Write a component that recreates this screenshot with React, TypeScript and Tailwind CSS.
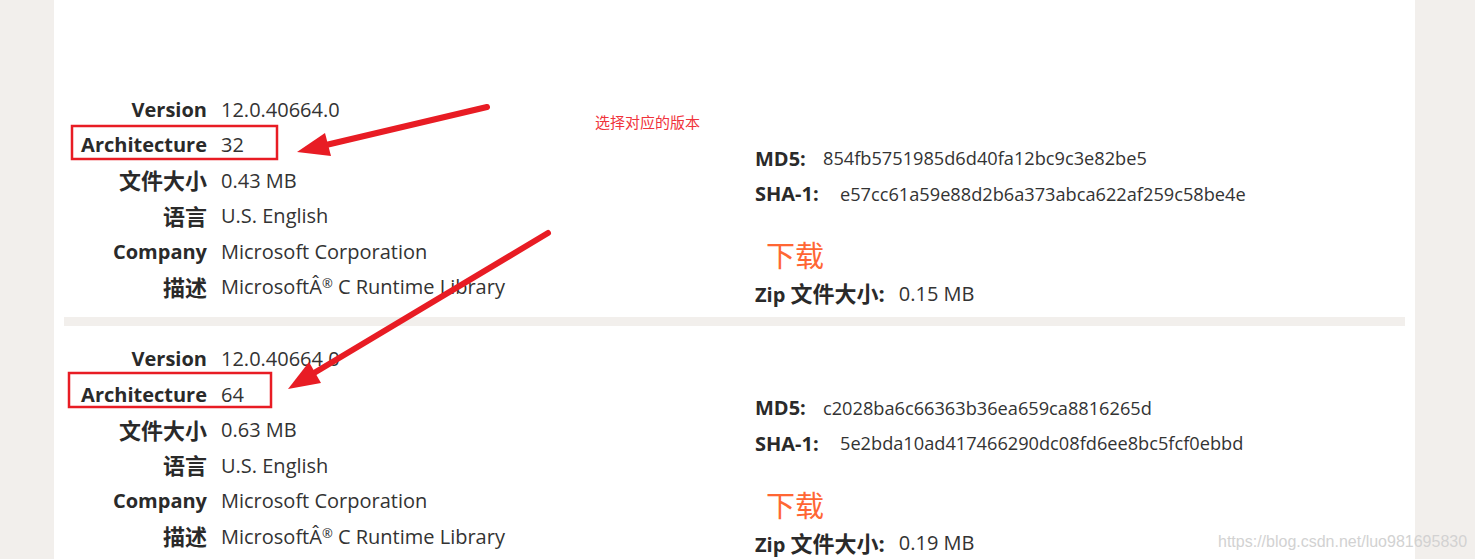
import React from 'react'

type Pacote = {
  versao: string
  arquitetura: string
  tamanho: string
  md5: string
  sha1: string
  zip: string
}

const pacotes: Pacote[] = [
  {
    versao: '12.0.40664.0',
    arquitetura: '32',
    tamanho: '0.43 MB',
    md5: '854fb5751985d6d40fa12bc9c3e82be5',
    sha1: 'e57cc61a59e88d2b6a373abca622af259c58be4e',
    zip: '0.15 MB',
  },
  {
    versao: '12.0.40664.0',
    arquitetura: '64',
    tamanho: '0.63 MB',
    md5: 'c2028ba6c66363b36ea659ca8816265d',
    sha1: '5e2bda10ad417466290dc08fd6ee8bc5fcf0ebbd',
    zip: '0.19 MB',
  },
]

function Linha({ label, valor, cjk }: { label: string; valor: React.ReactNode; cjk?: boolean }) {
  return (
    <div className="flex items-center h-[35.5px]">
      <span className={`w-[143px] text-right font-bold text-[#2a2a2a] ${cjk ? 'text-[22px]' : ''}`}>
        {label}
      </span>
      <span className="ml-[14px] text-[#333]">{valor}</span>
    </div>
  )
}

function Bloco({ p }: { p: Pacote }) {
  return (
    <div className="flex items-start">
      {/* coluna da esquerda com os detalhes */}
      <div className="w-[691px] flex flex-col">
        <Linha label="Version" valor={p.versao} />
        <Linha label="Architecture" valor={p.arquitetura} />
        <Linha label="文件大小" valor={p.tamanho} cjk />
        <Linha label="语言" valor="U.S. English" cjk />
        <Linha label="Company" valor="Microsoft Corporation" />
        <Linha
          label="描述"
          valor={
            <>
              MicrosoftÂ<span className="text-[13px] relative -top-[6px]">®</span> C Runtime Library
            </>
          }
          cjk
        />
      </div>
      {/* coluna da direita: hashes e download */}
      <div className="flex flex-col pt-[49px]">
        <div className="flex items-center h-[35.5px]">
          <span className="w-[68px] font-bold text-[#2a2a2a]">MD5:</span>
          <span className="text-[18.2px] text-[#333]">{p.md5}</span>
        </div>
        <div className="flex items-center h-[35.5px]">
          <span className="w-[85px] font-bold text-[#2a2a2a]">SHA-1:</span>
          <span className="text-[18.2px] text-[#333]">{p.sha1}</span>
        </div>
        <div className="mt-[24px] h-[40px] flex items-center pl-[11px] text-[29px] text-[#ff6633]">下载</div>
        <div className="flex items-center h-[35.5px]">
          <span className="font-bold text-[#2a2a2a]">
            Zip <span className="text-[22px]">文件大小:</span>
          </span>
          <span className="ml-[14px] text-[#333]">{p.zip}</span>
        </div>
      </div>
    </div>
  )
}

export default function App() {
  return (
    <div
      className="relative h-[559px] w-[1475px] overflow-hidden flex bg-[#f2efec] text-[20px]"
      style={{ fontFamily: '"Open Sans", "Noto Sans CJK SC", sans-serif' }}
    >
      <div className="w-[54px]" />
      <div className="w-[1361px] bg-white px-[10px] pt-[92px]">
        <Bloco p={pacotes[0]} />
        <div className="mt-[5px] h-[9px] bg-[#f2efec]" />
        <div className="mt-[16px]">
          <Bloco p={pacotes[1]} />
        </div>
      </div>

      {/* anotações por cima da página */}
      <svg className="absolute inset-0 pointer-events-none" width="1475" height="559">
        <rect x="72" y="126" width="205" height="33" fill="none" stroke="#e81c24" strokeWidth="2.5" />
        <rect x="69" y="373" width="202" height="34" fill="none" stroke="#e81c24" strokeWidth="2.5" />
        <line x1="487" y1="107" x2="326" y2="145" stroke="#e81c24" strokeWidth="6" strokeLinecap="round" />
        <polygon points="297,152 331,156 325,133" fill="#e81c24" />
        <line x1="548" y1="233" x2="314" y2="373" stroke="#e81c24" strokeWidth="6" strokeLinecap="round" />
        <polygon points="288,389 321,383 309,362" fill="#e81c24" />
      </svg>
      <span
        className="absolute left-[595px] top-[111px] text-[15px] text-[#f0333b]"
        style={{ fontFamily: '"Noto Sans CJK SC", sans-serif' }}
      >
        选择对应的版本
      </span>
      <span
        className="absolute left-[1218px] top-[530px] text-[16px] text-[#d2d2d2]"
        style={{ fontFamily: '"Liberation Sans", sans-serif' }}
      >
        https://blog.csdn.net/luo981695830
      </span>
    </div>
  )
}
